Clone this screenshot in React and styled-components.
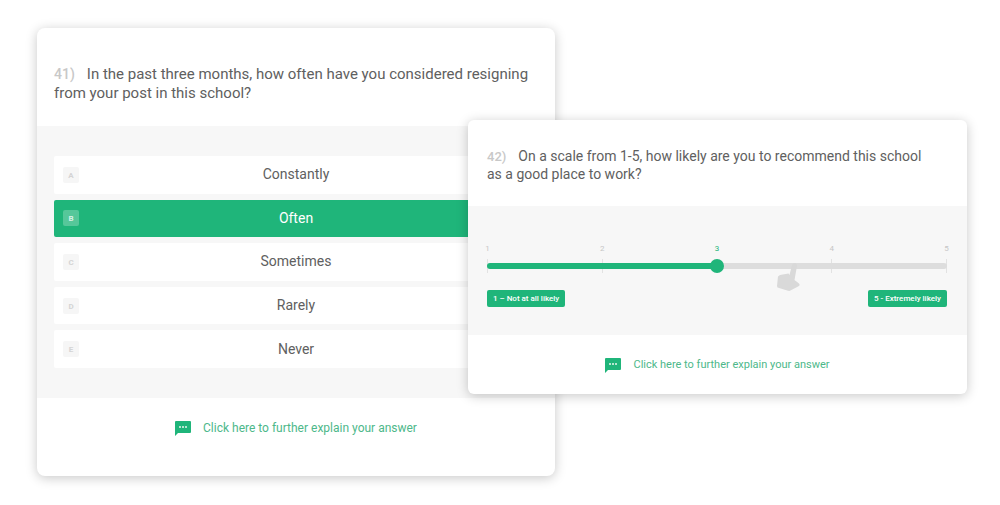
import React, { useState } from "react";
import styled, { createGlobalStyle } from "styled-components";

const green = "#1fb57a";

const GlobalStyle = createGlobalStyle`
  *, *::before, *::after { box-sizing: border-box; }
  body {
    margin: 0;
    background: #fff;
    color: #606060;
    font-family: Roboto, "Liberation Sans", sans-serif;
  }
`;

const Stage = styled.main`
  display: grid;
  grid-template-columns: 431fr 87fr 412fr;
  align-items: start;
  padding: 28px 33px 28px 37px;
`;

const Card = styled.form`
  grid-row: 1;
  grid-column: ${(p) => (p.$front ? "2 / 4" : "1 / 3")};
  margin-top: ${(p) => (p.$front ? "92px" : "0")};
  z-index: ${(p) => (p.$front ? 1 : 0)};
  min-width: 0;
  background: #fff;
  border-radius: ${(p) => (p.$front ? "6px" : "8px")};
  box-shadow: 0 2px 12px rgba(0, 0, 0, 0.22);
`;

const Question = styled.h2`
  margin: 0;
  padding: ${(p) => (p.$compact ? "27px 32px 23px 19px" : "37px 17px 23px")};
  font-size: ${(p) => (p.$compact ? "14px" : "15px")};
  line-height: ${(p) => (p.$compact ? "18px" : "19px")};
  font-weight: 400;
`;

const Number = styled.span`
  margin-right: 12px;
  color: #c8c8c8;
  font-size: ${(p) => (p.$compact ? "13px" : "14px")};
  line-height: 1;
  font-weight: 500;
`;

const Panel = styled.div`
  padding: ${(p) => (p.$compact ? "38px 20px 28px 19px" : "30px 17px")};
  background: #f7f7f7;
`;

const Options = styled.div`
  display: grid;
  grid-auto-rows: 1fr;
  gap: 6px;
  min-height: 212px;
`;

const HiddenRadio = styled.input`
  position: absolute;
  opacity: 0;
  pointer-events: none;
`;

const Letter = styled.span`
  display: grid;
  place-items: center;
  width: 16px;
  height: 16px;
  border-radius: 2px;
  background: #f6f6f6;
  color: #d4d4d4;
  font-size: 8px;
  font-weight: 700;
`;

const OptionText = styled.span`
  padding-bottom: 1px;
`;

const Option = styled.label`
  display: grid;
  grid-template-columns: 16px 1fr 16px;
  align-items: center;
  padding: 0 9px;
  border-radius: 2px;
  background: #fff;
  font-size: 14px;
  line-height: 18px;
  text-align: center;
  cursor: pointer;

  &:has(input:checked) {
    background: ${green};
    color: #fff;
  }
  &:has(input:checked) ${Letter} {
    background: #56c79a;
    color: #d5f1e5;
  }
`;

const Footer = styled.div`
  display: flex;
  justify-content: center;
  padding: ${(p) => (p.$compact ? "21px 19px 20px" : "21px 17px 39px")};
`;

const Explain = styled.button`
  display: flex;
  align-items: center;
  gap: 12px;
  padding: 0;
  border: 0;
  background: none;
  color: #4db88a;
  font-family: inherit;
  font-size: ${(p) => (p.$compact ? "11px" : "12px")};
  line-height: 18px;
  cursor: pointer;
`;

const Scale = styled.div`
  position: relative;
`;

const Marks = styled.div`
  display: flex;
  justify-content: space-between;
  height: 10px;
  margin-bottom: 5px;
`;

const Mark = styled.span`
  display: flex;
  justify-content: center;
  width: 1px;
  color: ${(p) => (p.$active ? green : "#c6c6c6")};
  font-size: 8px;
  line-height: 10px;
`;

const Track = styled.div`
  display: grid;
  align-items: center;
  > * { grid-area: 1 / 1; }
`;

const Ticks = styled.div`
  display: flex;
  justify-content: space-between;
`;

const Tick = styled.span`
  width: 1px;
  height: 14px;
  background: #e2e2e2;
`;

const Slider = styled.input`
  appearance: none;
  width: 100%;
  height: 14px;
  margin: 0;
  background: none;
  cursor: pointer;

  &::-webkit-slider-runnable-track {
    height: 6px;
    border-radius: 3px;
    background: linear-gradient(
      to right,
      ${green} ${(p) => p.$fill}%,
      #dddddd ${(p) => p.$fill}%
    );
  }

  &::-webkit-slider-thumb {
    appearance: none;
    width: 14px;
    height: 14px;
    margin-top: -4px;
    border-radius: 50%;
    background: ${green};
  }
`;

const Hand = styled.svg`
  position: absolute;
  top: 18px;
  left: 62.5%;
  pointer-events: none;
`;

const Ends = styled.div`
  display: flex;
  justify-content: space-between;
  margin-top: 17px;
`;

const Tag = styled.span`
  padding: 0 6px;
  border-radius: 2px;
  background: ${green};
  color: #fff;
  font-size: 8px;
  line-height: 17px;
  font-weight: 500;
`;

function ExplainButton({ compact }) {
  return (
    <Footer $compact={compact}>
      <Explain type="button" $compact={compact}>
        <svg width="16" height="16" viewBox="0 0 16 16" aria-hidden="true">
          <path d="M1 1H15Q16 1 16 2V12Q16 13 15 13H3L0 16V2Q0 1 1 1Z" fill={green} />
          <path d="M4 6h2v2H4zM7 6h2v2H7zM10 6h2v2h-2z" fill="#b5e6d0" />
        </svg>
        Click here to further explain your answer
      </Explain>
    </Footer>
  );
}

const answers = ["Constantly", "Often", "Sometimes", "Rarely", "Never"];

export default function App() {
  const [answer, setAnswer] = useState("Often");
  const [score, setScore] = useState(3);

  return (
    <>
      <GlobalStyle />
      <Stage>
        <Card>
          <Question>
            <Number>41)</Number>In the past three months, how often have you
            considered resigning from your post in this school?
          </Question>
          <Panel>
            <Options role="radiogroup" aria-label="Answer">
              {answers.map((text, i) => (
                <Option key={text}>
                  <Letter>{"ABCDE"[i]}</Letter>
                  <OptionText>{text}</OptionText>
                  <HiddenRadio
                    type="radio"
                    name="answer"
                    checked={answer === text}
                    onChange={() => setAnswer(text)}
                  />
                </Option>
              ))}
            </Options>
          </Panel>
          <ExplainButton />
        </Card>

        <Card $front>
          <Question $compact>
            <Number $compact>42)</Number>On a scale from 1-5, how likely are you
            to recommend this school as a good place to work?
          </Question>
          <Panel $compact>
            <Scale>
              <Marks>
                {[1, 2, 3, 4, 5].map((n) => (
                  <Mark key={n} $active={n === score}>{n}</Mark>
                ))}
              </Marks>
              <Track>
                <Ticks>
                  {[1, 2, 3, 4, 5].map((n) => <Tick key={n} />)}
                </Ticks>
                <Slider
                  type="range"
                  min="1"
                  max="5"
                  aria-label="Likelihood to recommend"
                  value={score}
                  $fill={(score - 1) * 25}
                  onChange={(e) => setScore(+e.target.value)}
                />
              </Track>
              <Hand width="26" height="30" viewBox="0 0 26 30" aria-hidden="true">
                <path
                  d="M17 3Q18 1 20 1Q22 2 22 4L19.500 18L24 21.500Q25.500 23 24 24L14.500 29L13 28.800L2.500 25.500L2 24L3 14.500L5 13L13.500 11.500L14.500 13Z"
                  fill="#d9d9d9"
                />
              </Hand>
              <Ends>
                <Tag>1 – Not at all likely</Tag>
                <Tag>5 - Extremely likely</Tag>
              </Ends>
            </Scale>
          </Panel>
          <ExplainButton compact />
        </Card>
      </Stage>
    </>
  );
}
